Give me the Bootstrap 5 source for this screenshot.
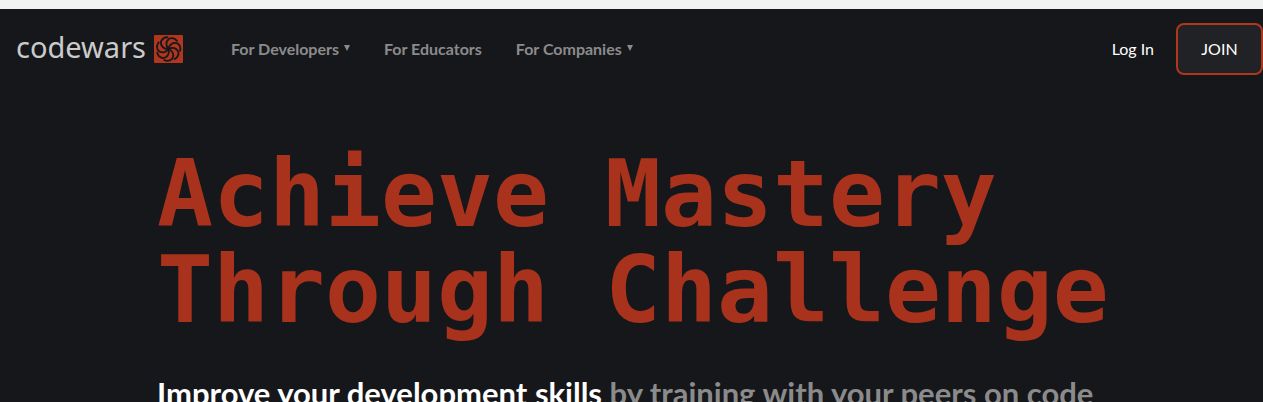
<!DOCTYPE html>
<html lang="en">
<head>
<meta charset="utf-8">
<meta name="viewport" content="width=device-width, initial-scale=1">
<title>Codewars</title>
<link href="https://cdn.jsdelivr.net/npm/bootstrap@5.3.0/dist/css/bootstrap.min.css" rel="stylesheet">
<style>
  body { background: #16171b; font-family: Lato, sans-serif; color: #fff; }
  .top-strip { height: 9px; background: #f1f3f3; }
  .page { height: 100vh; }
  .site-nav { height: 80px; padding-left: 16px; }
  .wordmark { font-family: "Noto Sans", sans-serif; font-size: 29px; line-height: 32px; padding-bottom: 4px; font-weight: 400; color: #cbcbcb; }
  .site-nav a { text-decoration: none; }
  .menu-link { color: #8b8b8c; font-weight: 700; line-height: 24px; padding: 0; border: 0; background: none; }
  .menu-link svg { margin-left: 5px; }
  .menus { gap: 34px; margin-left: 48px; }
  .login { color: #fff; margin-right: 22px; }
  .join { width: 87px; height: 52px; background: #202225; border: 2px solid #b1361e; border-radius: 8px; color: #fff; }
  .hero { padding: 57px 24px 0 157px; }
  .hero h1 { font: bold 93px/96px "DejaVu Sans Mono", monospace; color: #a8321c; }
  .hero p { font-size: 31px; line-height: 40px; font-weight: 700; color: #8b8b8c; margin-top: 35px; }
  .hero strong { color: #fff; font-weight: 700; }
</style>
</head>
<body>
<div class="page d-flex flex-column overflow-hidden">
  <div class="top-strip flex-shrink-0"></div>
  <header class="site-nav d-flex align-items-center flex-shrink-0">
    <a href="#" class="d-flex align-items-center gap-2" aria-label="Codewars home">
      <span class="wordmark">codewars</span>
      <svg width="29" height="28" viewBox="0 0 29 28" aria-hidden="true">
        <defs><path id="blade" d="M0 0C-3-3-3-8 1-10.500Q6-12 9-7.500"/></defs>
        <rect width="29" height="28" rx="1" fill="#b1361e"/>
        <g transform="translate(14.500 14)" fill="none" stroke="#17181b" stroke-width="1.800">
          <use href="#blade"/><use href="#blade" transform="rotate(51.430)"/><use href="#blade" transform="rotate(102.860)"/><use href="#blade" transform="rotate(154.290)"/><use href="#blade" transform="rotate(205.710)"/><use href="#blade" transform="rotate(257.140)"/><use href="#blade" transform="rotate(308.570)"/>
        </g>
      </svg>
    </a>
    <nav class="menus d-flex">
      <button type="button" class="menu-link d-flex">For Developers
        <svg width="6" height="24" aria-hidden="true"><path d="M0 8h6l-3 6z" fill="currentColor"/></svg></button>
      <a href="#" class="menu-link">For Educators</a>
      <button type="button" class="menu-link d-flex">For Companies
        <svg width="6" height="24" aria-hidden="true"><path d="M0 8h6l-3 6z" fill="currentColor"/></svg></button>
    </nav>
    <a href="#" class="login ms-auto">Log In</a>
    <button type="button" class="join">JOIN</button>
  </header>
  <main class="hero">
    <h1 class="mb-0">Achieve Mastery<br>Through Challenge</h1>
    <p class="mb-0"><strong>Improve your development skills</strong> by training with your peers on code</p>
  </main>
</div>
<script src="https://cdn.jsdelivr.net/npm/bootstrap@5.3.0/dist/js/bootstrap.bundle.min.js"></script>
</body>
</html>
